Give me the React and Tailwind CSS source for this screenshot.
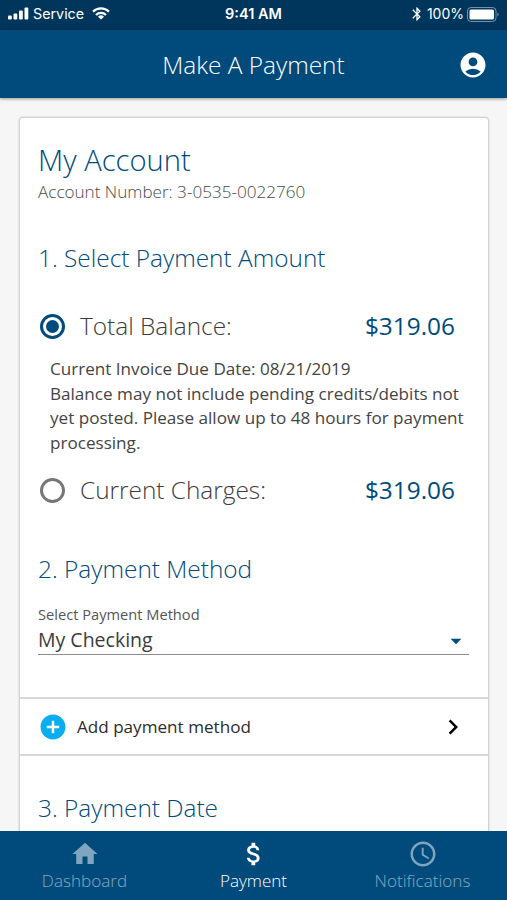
import { useState } from "react";
import {
  MdAccessTime,
  MdAccountCircle,
  MdAddCircle,
  MdArrowDropDown,
  MdAttachMoney,
  MdBluetooth,
  MdChevronRight,
  MdHome,
} from "react-icons/md";

const options = [
  { id: "total", label: "Total Balance:", amount: "$319.06" },
  { id: "current", label: "Current Charges:", amount: "$319.06" },
];

const tabs = [
  { id: "dashboard", label: "Dashboard", icon: MdHome },
  { id: "payment", label: "Payment", icon: MdAttachMoney },
  { id: "notifications", label: "Notifications", icon: MdAccessTime },
];

const StatusBar = () => (
  <div className="h-[30px] shrink-0 bg-[#00355c] text-white grid grid-cols-3 items-center px-2 font-['Inter',sans-serif] text-[14.5px] leading-none">
    <div className="flex items-center pb-[2px]">
      <svg width="21" height="13" viewBox="0 0 21 13" fill="currentColor">
        <rect x="0" y="8.5" width="3.8" height="4" rx="1" />
        <rect x="5.5" y="6.5" width="3.8" height="6" rx="1" />
        <rect x="11" y="3.5" width="3.8" height="9" rx="1" />
        <rect x="16.5" y="0.5" width="3.8" height="12" rx="1" />
      </svg>
      <span className="ml-[4px] text-[14.3px]">Service</span>
      <svg className="ml-[8px]" width="18" height="13" viewBox="0 0 18 13" fill="none" stroke="currentColor" strokeWidth="2.2">
        <path d="M1 4.6a11.4 11.4 0 0 1 16 0" />
        <path d="M4 8a7 7 0 0 1 10 0" />
        <path d="M9 12.6 6 9.8a4.3 4.3 0 0 1 6 0z" fill="currentColor" stroke="none" />
      </svg>
    </div>
    <span className="text-center font-semibold pb-[1px]">9:41 AM</span>
    <div className="flex items-center justify-end pb-[2px]">
      <MdBluetooth size={16} />
      <span className="ml-[2px] text-[14px]">100%</span>
      <svg className="ml-[3px] -mr-[1px]" width="33" height="15" viewBox="0 0 33 15">
        <rect x="0.5" y="0.5" width="28.5" height="14" rx="3.5" fill="none" stroke="white" strokeOpacity="0.45" />
        <rect x="2.5" y="2.5" width="24.5" height="10" rx="1.5" fill="white" />
        <path d="M30.5 5.5v4a2.4 2.4 0 0 0 0-4z" fill="white" fillOpacity="0.5" />
      </svg>
    </div>
  </div>
);

const Option = ({ option, checked, onSelect }) => (
  <button onClick={onSelect} className="flex w-full items-center h-[36px] pl-[2px] pr-[15px]">
    <span
      className={`w-[25px] h-[25px] rounded-full border-[3px] flex items-center justify-center ${
        checked ? "border-[#004a7c]" : "border-[#777777]"
      }`}
    >
      {checked && <span className="w-[13px] h-[13px] rounded-full bg-[#004a7c]" />}
    </span>
    <span className="ml-[15px] pt-[1px] text-[24.4px] font-light text-[#3c3c3c]">{option.label}</span>
    <span className="ml-auto pt-[1px] text-[24.4px] text-[#004a7c]">{option.amount}</span>
  </button>
);

const App = () => {
  const [selected, setSelected] = useState("total");
  const [activeTab, setActiveTab] = useState("payment");

  return (
    <div className="w-[507px] h-[900px] flex flex-col overflow-hidden bg-[#f6f6f6] font-['Open_Sans',sans-serif]">
      <StatusBar />

      {/* Header */}
      <header className="z-10 h-[68px] shrink-0 bg-[#004a7c] text-white grid grid-cols-[1fr_auto_1fr] items-center px-5 shadow-[0_1px_3px_rgba(0,0,0,0.4)]">
        <span />
        <h1 className="text-[24.4px] font-light leading-9 pt-[2px]">Make A Payment</h1>
        <MdAccountCircle size={30} className="justify-self-end -mr-[1px] mt-[2px]" />
      </header>

      {/* Card */}
      <main className="flex-1 min-h-0 overflow-hidden px-5 pt-5">
        <div className="w-[468px] h-[760px] bg-white rounded-[3px] shadow-[0_0_2px_1px_rgba(0,0,0,0.2)]">
          <div className="px-[18px] pt-[22px] h-[579px]">
            <h2 className="text-[29.2px] leading-10 font-light text-[#004a7c]">My Account</h2>
            <p className="text-[17.1px] leading-6 font-light text-[#4a4a4a]">Account Number: 3-0535-0022760</p>

            <h3 className="mt-[36px] text-[24.4px] leading-9 font-light text-[#004a7c]">1. Select Payment Amount</h3>
            <div className="mt-[32px]">
              <Option option={options[0]} checked={selected === "total"} onSelect={() => setSelected("total")} />
            </div>
            <p className="mt-[13px] pl-[12px] text-[17.1px] leading-[24.5px] text-[#444444] whitespace-nowrap">
              Current Invoice Due Date: 08/21/2019
              <br />
              Balance may not include pending credits/debits not
              <br />
              yet posted. Please allow up to 48 hours for payment
              <br />
              processing.
            </p>
            <div className="mt-[17px]">
              <Option option={options[1]} checked={selected === "current"} onSelect={() => setSelected("current")} />
            </div>

            <h3 className="mt-[43px] text-[24.4px] leading-9 font-light text-[#004a7c]">2. Payment Method</h3>
            <label className="block mt-[17px] text-[14.65px] leading-5 text-[#555555]">Select Payment Method</label>
            <div className="flex items-center justify-between w-[431px] h-[31px] border-b-[1.5px] border-[#8c8c8c] text-[19.5px] text-[#3c3c3c]">
              <span className="pt-[2px]">My Checking</span>
              <MdArrowDropDown size={26} className="mt-[3px] text-[#004a7c]" />
            </div>
          </div>

          <button className="flex w-full items-center h-[59px] border-y-[2px] border-[#d8d8d8] pl-[18px] pr-[20px]">
            <MdAddCircle size={30} className="text-[#08aeef]" />
            <span className="ml-[9px] text-[17.1px] text-[#2c2c2c]">Add payment method</span>
            <MdChevronRight size={30} className="ml-auto text-black" />
          </button>

          <h3 className="mt-[34px] px-[18px] text-[24.4px] leading-9 font-light text-[#004a7c]">3. Payment Date</h3>
        </div>
      </main>

      {/* Bottom tabs */}
      <nav className="h-[69px] shrink-0 bg-[#004a7c] grid grid-cols-3">
        {tabs.map(({ id, label, icon: Icon }) => (
          <button
            key={id}
            onClick={() => setActiveTab(id)}
            className={`flex flex-col items-center pt-[8px] text-white ${activeTab === id ? "" : "opacity-50"}`}
          >
            <Icon size={30} />
            <span className="text-[17.1px] leading-6 font-light">{label}</span>
          </button>
        ))}
      </nav>
    </div>
  );
};

export default App;
